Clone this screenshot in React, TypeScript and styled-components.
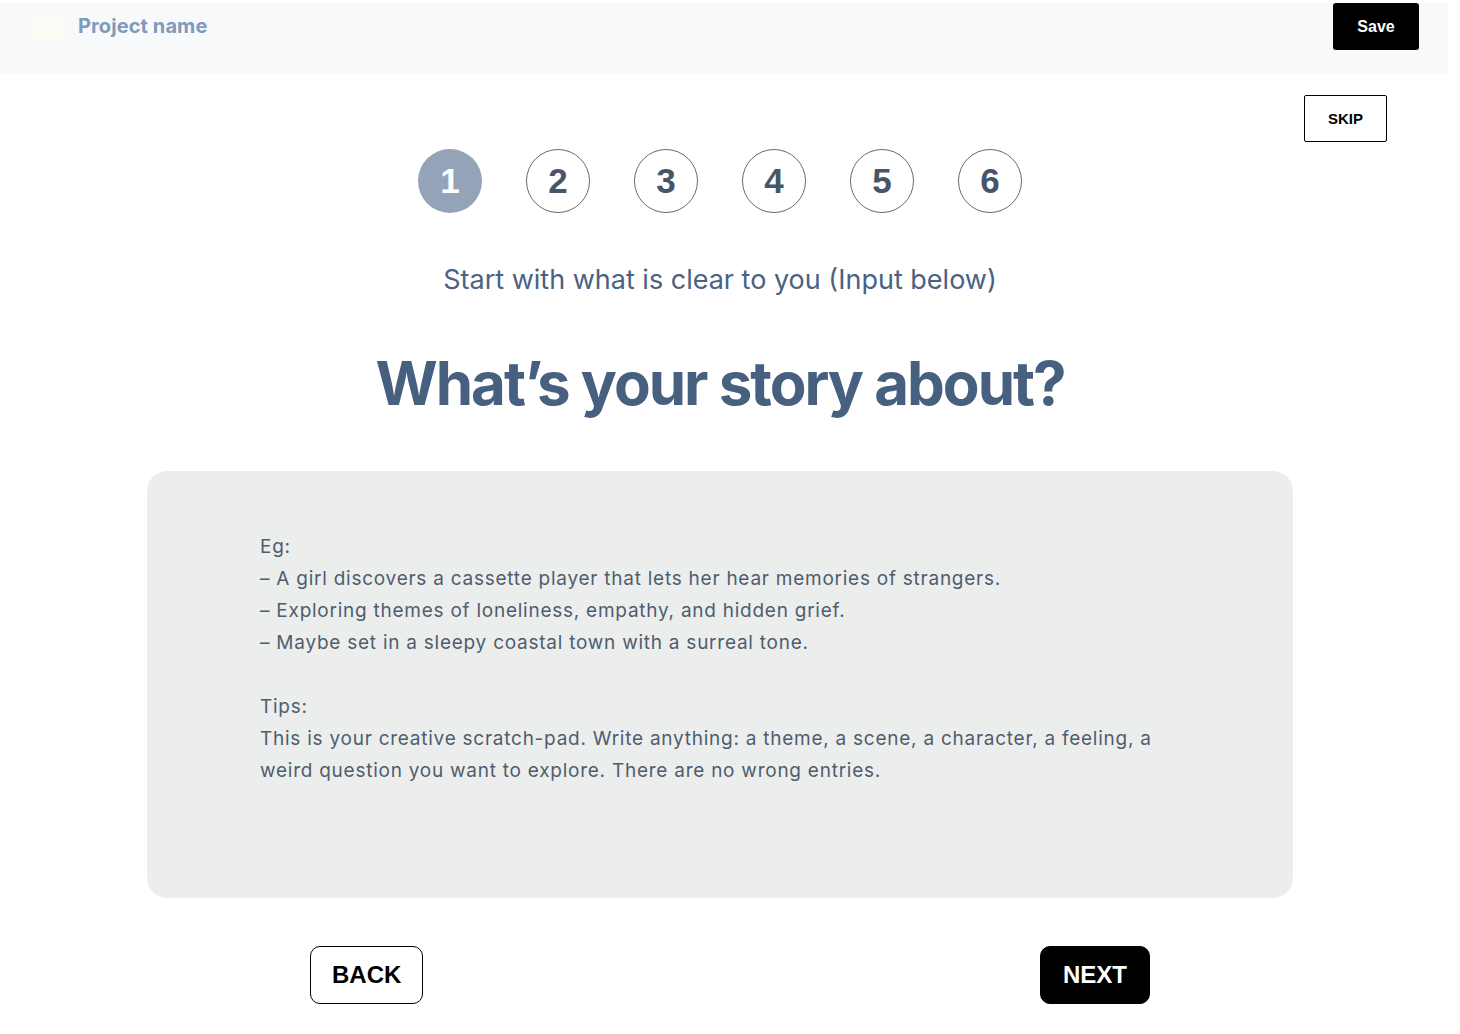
import React from "react";
import styled, { createGlobalStyle } from "styled-components";

const Global = createGlobalStyle`
  html, body { margin: 0; padding: 0; background: #ffffff; }
  body { font-family: Inter, "Noto Sans", sans-serif; }
  * { box-sizing: border-box; }
`;

const Page = styled.div`
  width: 1448px;
  display: flex;
  flex-direction: column;
  padding-top: 3px;
`;

const Header = styled.header`
  height: 70px;
  background: #f8f9fb;
  display: flex;
  align-items: flex-start;
  padding: 0 29px 0 31px;
`;

const Logo = styled.div`
  width: 34px;
  height: 27px;
  margin-top: 11px;
  border-radius: 4px;
  background: #fcfbf5;
`;

const ProjectName = styled.div`
  margin-left: 13px;
  margin-top: 11px;
  font-size: 20px;
  font-weight: 700;
  color: #7f9aba;
  letter-spacing: 0.1px;
`;

const Spacer = styled.div`
  flex: 1;
`;

const SaveButton = styled.button`
  width: 86px;
  height: 47px;
  border: none;
  border-radius: 3px;
  background: #000;
  color: #fff;
  font-family: "Liberation Sans", Arial, sans-serif;
  font-weight: 700;
  font-size: 16px;
  cursor: pointer;
`;

const SkipRow = styled.div`
  display: flex;
  justify-content: flex-end;
  padding-right: 61px;
  margin-top: 22px;
`;

const SkipButton = styled.button`
  width: 83px;
  height: 47px;
  border: 1px solid #000;
  border-radius: 2px;
  background: #fff;
  color: #000;
  font-family: "Liberation Sans", Arial, sans-serif;
  font-weight: 700;
  font-size: 15px;
  cursor: pointer;
`;

const Main = styled.main`
  width: 1440px;
  display: flex;
  flex-direction: column;
  align-items: center;
`;

const Steps = styled.div`
  display: flex;
  gap: 44px;
  margin-top: 7px;
`;

const Step = styled.div<{ $active?: boolean }>`
  width: 64px;
  height: 64px;
  border-radius: 50%;
  display: flex;
  align-items: center;
  justify-content: center;
  font-family: "Liberation Sans", Arial, sans-serif;
  font-weight: 700;
  font-size: 35px;
  background: ${(p) => (p.$active ? "#94a3b8" : "#ffffff")};
  color: ${(p) => (p.$active ? "#ffffff" : "#475569")};
  border: ${(p) => (p.$active ? "none" : "1px solid #6b6b6b")};
`;

const Subtitle = styled.p`
  margin: 49px 0 0;
  font-size: 27px;
  font-weight: 400;
  color: #4a6283;
  line-height: 36px;
`;

const Heading = styled.h1`
  margin: 45px 0 0;
  font-size: 60px;
  font-weight: 700;
  color: #48607f;
  line-height: 80px;
  letter-spacing: -2px;
`;

const Box = styled.div`
  width: 1146px;
  height: 427px;
  margin-top: 48px;
  border-radius: 20px;
  background: #eceeed;
  padding: 60px 113px;
  font-size: 19px;
  line-height: 32px;
  letter-spacing: 0.75px;
  color: #4f5d6e;
`;

const Line = styled.div`
  min-height: 32px;
`;

const ButtonsRow = styled.div`
  width: 1440px;
  display: flex;
  justify-content: space-between;
  padding: 0 290px 0 310px;
  margin-top: 48px;
`;

const NavButton = styled.button<{ $primary?: boolean }>`
  height: 58px;
  padding: 0 ${(p) => (p.$primary ? "22px" : "21px")};
  border-radius: 10px;
  border: 1px solid #000;
  background: ${(p) => (p.$primary ? "#000" : "#fff")};
  color: ${(p) => (p.$primary ? "#fff" : "#000")};
  font-family: "Liberation Sans", Arial, sans-serif;
  font-weight: 700;
  font-size: 24px;
  cursor: pointer;
`;

const lines = [
  "Eg:",
  "– A girl discovers a cassette player that lets her hear memories of strangers.",
  "– Exploring themes of loneliness, empathy, and hidden grief.",
  "– Maybe set in a sleepy coastal town with a surreal tone.",
  "",
  "Tips:",
  "This is your creative scratch-pad. Write anything: a theme, a scene, a character, a feeling, a",
  "weird question you want to explore. There are no wrong entries.",
];

export default function App() {
  return (
    <>
      <Global />
      <Page>
        <Header>
          <Logo />
          <ProjectName>Project name</ProjectName>
          <Spacer />
          <SaveButton>Save</SaveButton>
        </Header>
        <SkipRow>
          <SkipButton>SKIP</SkipButton>
        </SkipRow>
        <Main>
          <Steps>
            {[1, 2, 3, 4, 5, 6].map((n) => (
              <Step key={n} $active={n === 1}>
                {n}
              </Step>
            ))}
          </Steps>
          <Subtitle>Start with what is clear to you (Input below)</Subtitle>
          <Heading>What’s your story about?</Heading>
          <Box>
            {lines.map((l, i) => (
              <Line key={i}>{l}</Line>
            ))}
          </Box>
        </Main>
        <ButtonsRow>
          <NavButton>BACK</NavButton>
          <NavButton $primary>NEXT</NavButton>
        </ButtonsRow>
      </Page>
    </>
  );
}
